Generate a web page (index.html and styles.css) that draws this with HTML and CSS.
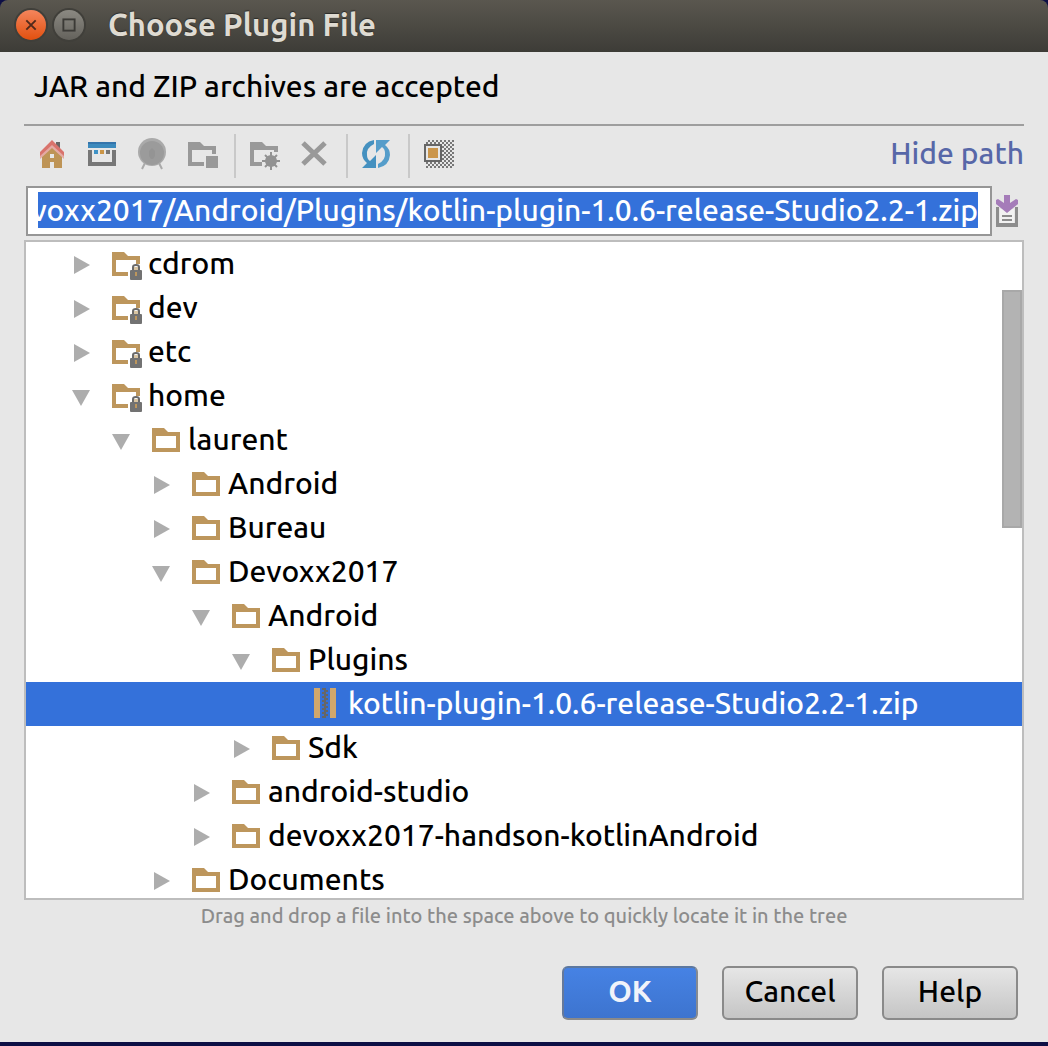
FILE: index.html
```html
<!DOCTYPE html>
<html lang="en">
<head>
<meta charset="utf-8">
<title>Choose Plugin File</title>
<link rel="stylesheet" href="styles.css">
</head>
<body>
<svg class="defs" aria-hidden="true">
  <symbol id="folder" viewBox="0 0 32 32"><path fill="#bd965c" fill-rule="evenodd" d="M0 4H12L16 8H28V28H0ZM4 12V24H24V12Z"/></symbol>
  <symbol id="locked" viewBox="0 0 32 32"><path fill="#bd965c" fill-rule="evenodd" d="M0 4H12L16 8H28V28H0ZM4 12V24H24V12Z"/><path fill="#fff" d="M18 16H28V22H18ZM16 22H18V28H16Z"/><path fill="#d8c4a2" d="M22 19H26V22H22Z"/><path fill="none" stroke="#6a6a6a" stroke-width="2" d="M21 23V19Q21 17 24 17Q27 17 27 19V23"/><rect x="18" y="22" width="12" height="10" rx="1" fill="#727272"/><path fill="#bd965c" d="M23 24H25V28H23Z"/></symbol>
  <symbol id="right" viewBox="0 0 20 20"><path fill="#adadad" d="M2 2L18 11L2 20Z"/></symbol>
  <symbol id="down" viewBox="0 0 20 20"><path fill="#adadad" d="M0 4H18L9 20Z"/></symbol>
</svg>
<main class="dialog">
  <header class="titlebar">
    <button class="win close" aria-label="Close"><svg viewBox="0 0 32 32"><path d="M11 11L21 21M21 11L11 21" stroke="#50291b" stroke-width="2"/></svg></button>
    <button class="win max" aria-label="Maximize"><svg viewBox="0 0 32 32"><rect x="10" y="10" width="12" height="12" fill="none" stroke="#3b3a36" stroke-width="2"/></svg></button>
    <h1 class="title">Choose Plugin File</h1>
  </header>
  <div class="content">
    <p class="message">JAR and ZIP archives are accepted</p>
    <div class="toolbar">
      <button class="tool" aria-label="Home"><svg viewBox="0 0 32 32"><path fill="#666" d="M20 4H24V11H20Z"/><path fill="#be9456" fill-rule="evenodd" d="M6 18L16 9L26 18V30H18V24H14V30H6ZM14 16V20H18V16Z"/><path fill="#e4aaa4" d="M4 17L16 6L28 17V21L16 10L4 21Z"/><path fill="#d9736c" d="M4 14L16 2L28 14V18L16 7L4 18Z"/></svg></button>
      <button class="tool" aria-label="Desktop"><svg viewBox="0 0 32 32"><path fill="#3475ac" d="M2 4H30V10H2Z"/><path fill="#3c8abd" d="M2 6H30V10H2Z"/><path fill="#777" d="M2 12H6V24H26V12H30V28H2Z"/><path fill="#3f92c6" d="M8 12H12V16H8Z"/><path fill="#cb9546" d="M14 12H18V16H14Z"/><path fill="#777" d="M20 12H24V16H20Z"/></svg></button>
      <button class="tool" aria-label="Project" disabled><svg viewBox="0 0 32 32"><path fill="none" stroke="#aaa" stroke-width="2" d="M9 25L6 31M23 25L26 31"/><circle cx="16" cy="14" r="14" fill="#aaa"/><circle cx="16" cy="15" r="12" fill="#9b9b9b"/><path fill="#949494" d="M16 10L19 13V18L17 21H15L13 18V13Z"/></svg></button>
      <button class="tool" aria-label="Module" disabled><svg viewBox="0 0 32 32"><path fill="#999" fill-rule="evenodd" d="M2 4H14L18 8H30V16H26V12H6V24H18V28H2Z"/><path fill="#999" d="M20 18H32V30H20Z"/></svg></button>
      <span class="separator"></span>
      <button class="tool" aria-label="New folder" disabled><svg viewBox="0 0 32 32"><path fill="#999" d="M2 4H14L18 8H30V14H26V12H6V24H14V28H2Z"/><circle cx="23" cy="23" r="6" fill="#929292"/><path stroke="#929292" stroke-width="2" d="M23 14V32M14 23H32M17 17L29 29M29 17L17 29"/></svg></button>
      <button class="tool" aria-label="Delete" disabled><svg viewBox="0 0 32 32"><path stroke="#999" stroke-width="5" d="M5 5L27 26M27 5L5 26"/></svg></button>
      <span class="separator"></span>
      <button class="tool" aria-label="Refresh"><svg viewBox="0 0 32 32"><path fill="#4591c0" d="M14 2V6Q6 10 7 17Q7 21 10 23L16 17V30H2L7 25Q2 21 2 15Q3 4 14 2Z"/><path fill="#559dca" d="M18 30V26Q26 22 25 15Q25 11 22 9L16 15V2H30L25 7Q30 11 30 17Q29 28 18 30Z"/></svg></button>
      <span class="separator"></span>
      <button class="tool" aria-label="Show hidden files"><svg viewBox="0 0 32 32"><defs><pattern id="dots" width="4" height="4" patternUnits="userSpaceOnUse"><path fill="#777" d="M0 0H2V2H0ZM2 2H4V4H2Z"/></pattern></defs><path fill="url(#dots)" d="M4 2H32V30H4Z"/><path fill="#e7e7e7" d="M3 7H19V23H3Z"/><path fill="none" stroke="#666" stroke-width="2" d="M3 7H19V23H3Z"/><path fill="#cb964b" d="M6 10H16V20H6Z"/></svg></button>
      <a class="hide-path" href="#path">Hide path</a>
    </div>
    <div class="path-row">
      <div class="path-box"><input id="path" class="path" type="text" aria-label="Path" value="voxx2017/Android/Plugins/kotlin-plugin-1.0.6-release-Studio2.2-1.zip"></div>
      <button class="history" aria-label="Path history"><svg viewBox="0 0 32 32"><path fill="#8d8d8d" d="M4 12H7V28H23V12H26V32H4Z"/><path fill="#fff" fill-opacity=".45" d="M8 14H22V28H8Z"/><path fill="#8d8d8d" d="M10 20H20V22H10ZM10 24H20V26H10Z"/><path fill="#a57cb9" d="M12 0H18V8L24 4L26 5V9L15 18L4 9V5L6 4L12 8Z"/></svg></button>
    </div>
    <div class="tree-box">
      <ul class="tree">
        <li class="row level-1"><button class="toggle" aria-label="Expand"><svg><use href="#right"/></svg></button><svg class="icon"><use href="#locked"/></svg><span class="name">cdrom</span></li>
        <li class="row level-1"><button class="toggle" aria-label="Expand"><svg><use href="#right"/></svg></button><svg class="icon"><use href="#locked"/></svg><span class="name">dev</span></li>
        <li class="row level-1"><button class="toggle" aria-label="Expand"><svg><use href="#right"/></svg></button><svg class="icon"><use href="#locked"/></svg><span class="name">etc</span></li>
        <li class="row level-1"><button class="toggle" aria-label="Collapse"><svg><use href="#down"/></svg></button><svg class="icon"><use href="#locked"/></svg><span class="name">home</span></li>
        <li class="row level-2"><button class="toggle" aria-label="Collapse"><svg><use href="#down"/></svg></button><svg class="icon"><use href="#folder"/></svg><span class="name">laurent</span></li>
        <li class="row level-3"><button class="toggle" aria-label="Expand"><svg><use href="#right"/></svg></button><svg class="icon"><use href="#folder"/></svg><span class="name">Android</span></li>
        <li class="row level-3"><button class="toggle" aria-label="Expand"><svg><use href="#right"/></svg></button><svg class="icon"><use href="#folder"/></svg><span class="name">Bureau</span></li>
        <li class="row level-3"><button class="toggle" aria-label="Collapse"><svg><use href="#down"/></svg></button><svg class="icon"><use href="#folder"/></svg><span class="name">Devoxx2017</span></li>
        <li class="row level-4"><button class="toggle" aria-label="Collapse"><svg><use href="#down"/></svg></button><svg class="icon"><use href="#folder"/></svg><span class="name">Android</span></li>
        <li class="row level-5"><button class="toggle" aria-label="Collapse"><svg><use href="#down"/></svg></button><svg class="icon"><use href="#folder"/></svg><span class="name">Plugins</span></li>
        <li class="row level-6 selected"><span class="toggle"></span><svg class="icon" viewBox="0 0 32 32"><defs><pattern id="zip" x="10" width="6" height="4" patternUnits="userSpaceOnUse"><path fill="#666" d="M0 0H4V2H0ZM2 2H6V4H2Z"/></pattern></defs><path fill="#d0a76c" d="M2 0H8V30H2ZM18 0H24V30H18Z"/><path fill="url(#zip)" d="M10 0H16V30H10Z"/></svg><span class="name">kotlin-plugin-1.0.6-release-Studio2.2-1.zip</span></li>
        <li class="row level-5"><button class="toggle" aria-label="Expand"><svg><use href="#right"/></svg></button><svg class="icon"><use href="#folder"/></svg><span class="name">Sdk</span></li>
        <li class="row level-4"><button class="toggle" aria-label="Expand"><svg><use href="#right"/></svg></button><svg class="icon"><use href="#folder"/></svg><span class="name">android-studio</span></li>
        <li class="row level-4"><button class="toggle" aria-label="Expand"><svg><use href="#right"/></svg></button><svg class="icon"><use href="#folder"/></svg><span class="name">devoxx2017-handson-kotlinAndroid</span></li>
        <li class="row level-3"><button class="toggle" aria-label="Expand"><svg><use href="#right"/></svg></button><svg class="icon"><use href="#folder"/></svg><span class="name">Documents</span></li>
      </ul>
      <div class="thumb"></div>
    </div>
    <p class="hint">Drag and drop a file into the space above to quickly locate it in the tree</p>
    <footer class="actions">
      <button class="action primary">OK</button>
      <button class="action">Cancel</button>
      <button class="action">Help</button>
    </footer>
  </div>
</main>
</body>
</html>
```
FILE: styles.css
```css
* {
  box-sizing: border-box;
}

body {
  margin: 0;
  background: #0d0f45;
  color: #000;
  font-family: Ubuntu, "Noto Sans", sans-serif;
  font-size: 30px;
  font-weight: 500;
  line-height: 44px;
}

button,
input {
  margin: 0;
  padding: 0;
  border: 0;
  background: none;
  color: inherit;
  font: inherit;
}

svg {
  display: block;
  flex: none;
  width: 32px;
  height: 32px;
}

.defs {
  position: absolute;
  width: 0;
  height: 0;
}

.dialog {
  display: flex;
  flex-direction: column;
  height: 100vh;
  border-bottom: 4px solid #0d0f45;
}

.titlebar {
  display: flex;
  flex: none;
  align-items: center;
  gap: 8px;
  height: 52px;
  padding: 0 16px 2px;
  border-radius: 8px 8px 0 0;
  background: linear-gradient(#5a574f, #3d3c37);
}

.win {
  width: 30px;
  height: 30px;
  border-radius: 50%;
  box-shadow: 0 0 0 2px #403f3a;
}

.win svg {
  width: 30px;
  height: 30px;
}

.close {
  background: linear-gradient(#f5855c, #e2500f);
}

.max {
  background: linear-gradient(#8b8982, #64625c);
}

.title {
  margin: 0 0 0 16px;
  color: #dfdbd2;
  font-size: 31px;
  font-weight: 700;
  text-shadow: 0 -1px 1px #2b2a27;
}

.content {
  display: flex;
  flex: 1;
  flex-direction: column;
  min-height: 0;
  padding: 0 24px 22px;
  background: #e7e7e7;
}

.message {
  margin: 0;
  padding: 12px 10px 16px;
  border-bottom: 2px solid #9e9e9e;
}

.toolbar {
  display: flex;
  align-items: center;
  padding: 8px 0 8px 3px;
}

.tool {
  display: flex;
  align-items: center;
  justify-content: center;
  width: 50px;
  height: 44px;
}

.tool svg {
  margin-top: -4px;
}

.separator {
  width: 2px;
  height: 44px;
  margin: 0 3px 0 7px;
  background: #c9c9c9;
}

.hide-path {
  align-self: flex-start;
  margin-left: auto;
  color: #5767a8;
  line-height: 38px;
  text-decoration: none;
}

.path-row {
  display: flex;
  align-items: center;
  padding-left: 2px;
}

.path-box {
  flex: 1;
  padding: 4px 12px 6px 10px;
  border: 2px solid #969696;
  background: #fff;
}

/* Right-to-left flow keeps the end of a long path in view. */
.path {
  display: block;
  width: 100%;
  height: 36px;
  background: #3471da;
  color: #fff;
  direction: rtl;
  text-align: right;
}

.tree-box {
  position: relative;
  flex: 1;
  min-height: 0;
  margin-top: 4px;
  overflow: hidden;
  border: 2px solid #bdbdbd;
  background: #fff;
}

.tree {
  margin: 0;
  padding: 0;
  list-style: none;
}

.row {
  display: flex;
  align-items: center;
  height: 44px;
  white-space: nowrap;
}

.row .icon {
  margin: 0 4px 0 20px;
}

.name {
  padding-bottom: 2px;
}

.toggle,
.toggle svg {
  width: 20px;
  height: 20px;
}

.level-1 { padding-left: 46px; }
.level-2 { padding-left: 86px; }
.level-3 { padding-left: 126px; }
.level-4 { padding-left: 166px; }
.level-5 { padding-left: 206px; }
.level-6 { padding-left: 246px; }

.selected {
  background: #3471da;
  color: #fff;
}

.thumb {
  position: absolute;
  top: 48px;
  right: 0;
  width: 20px;
  height: 238px;
  border: 2px solid #a8a8a8;
  background: #b3b3b3;
}

.hint {
  margin: 0;
  color: #8c8c8c;
  font-size: 20px;
  line-height: 32px;
  text-align: center;
}

.actions {
  display: flex;
  justify-content: flex-end;
  gap: 24px;
  padding: 34px 6px 0 0;
}

.action {
  width: 136px;
  height: 54px;
  padding-bottom: 4px;
  border: 2px solid #8a8a8a;
  border-radius: 6px;
  background: linear-gradient(#e6e6e6, #c5c5c5);
}

.primary {
  border-color: #5d789f #858a91 #8a8a8a #66799a;
  background: linear-gradient(#4682e4, #3d74cf);
  color: #f0f3fa;
  font-weight: 700;
}
```
